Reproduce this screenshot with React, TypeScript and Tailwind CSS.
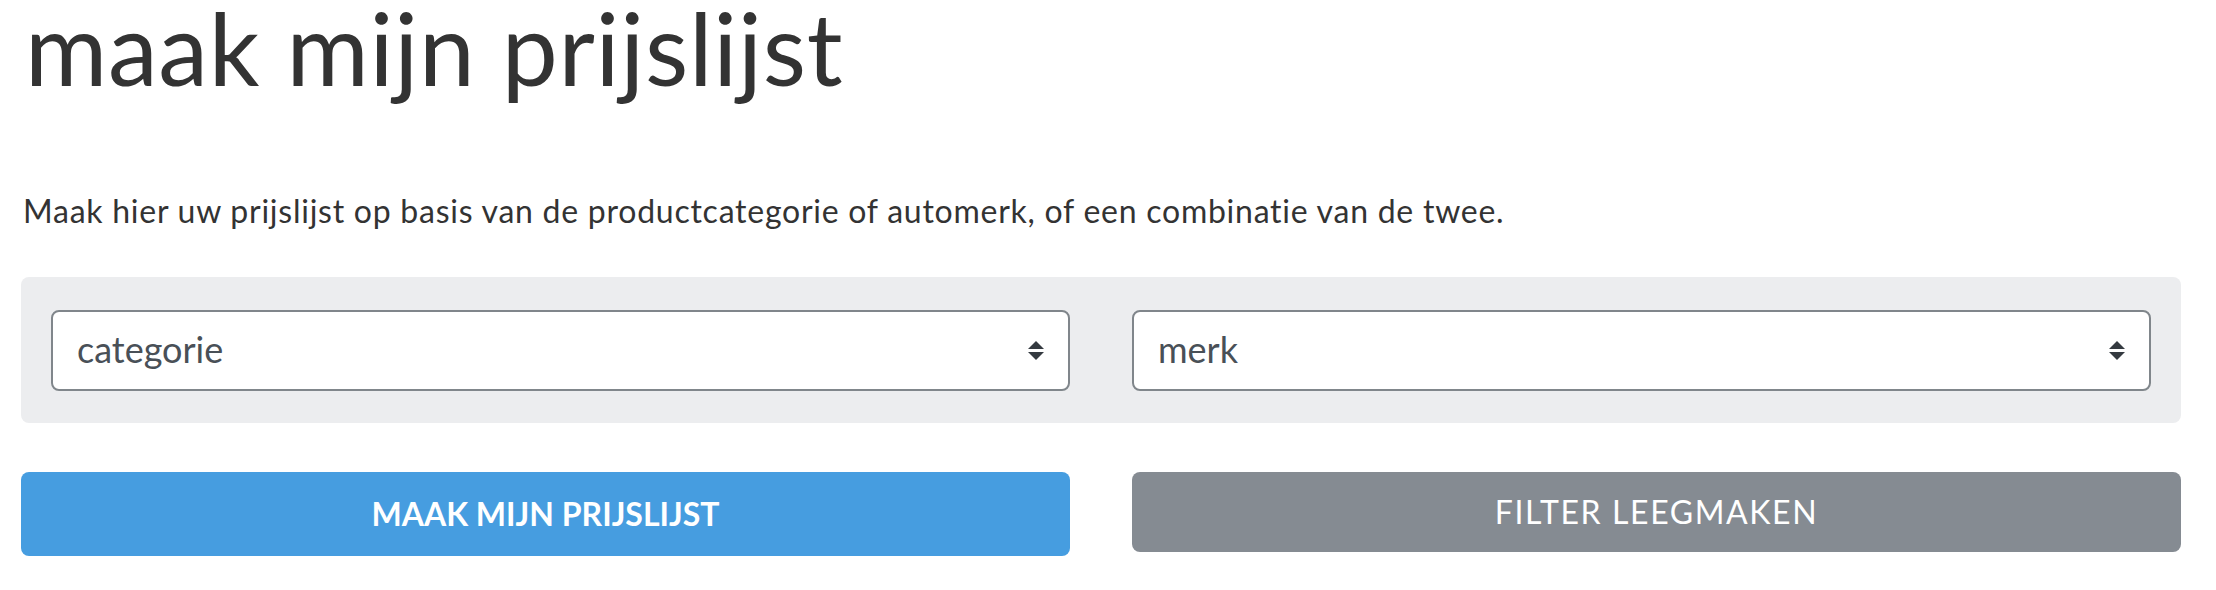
import React from "react";

function SortIcon() {
  return (
    <svg width="16" height="19" viewBox="0 0 16 19" className="shrink-0">
      <path d="M8 0 L16 8 L0 8 Z" fill="#343a40" />
      <path d="M0 11 L16 11 L8 19 Z" fill="#343a40" />
    </svg>
  );
}

function Select({ label }: { label: string }) {
  return (
    <div className="flex h-[81px] items-center justify-between rounded-[8px] border-2 border-[#80868b] bg-white pl-[24px] pr-[24px]">
      <span className="pb-[4px] text-[36px] leading-none text-[#495057]">{label}</span>
      <SortIcon />
    </div>
  );
}

export default function App() {
  return (
    <div
      className="min-h-[590px] w-[2216px] bg-white pl-[21px] text-[#333333]"
      style={{ fontFamily: "Lato, 'Noto Sans', sans-serif" }}
    >
      <div className="w-[2160px]">
        <h1 className="pl-[4px] text-[100px] font-normal leading-[94px] tracking-[0.7px] text-[#333333]">
          maak mijn prijslijst
        </h1>
        <p className="mt-[93px] pl-[2px] text-[32px] leading-[48px] tracking-[0.75px] text-[#333333]">
          Maak hier uw prijslijst op basis van de productcategorie of automerk, of een combinatie van de twee.
        </p>
        <div className="mt-[42px] rounded-[8px] bg-[#ecedef] px-[30px] pb-[32px] pt-[33px]">
          <div className="grid grid-cols-2 gap-[62px]">
            <Select label="categorie" />
            <Select label="merk" />
          </div>
        </div>
        <div className="mt-[49px] grid grid-cols-2 items-start gap-[62px]">
          <button className="flex h-[84px] items-center justify-center rounded-[8px] bg-[#469de0] text-[32px] font-bold uppercase text-white">
            maak mijn prijslijst
          </button>
          <button className="flex h-[80px] items-center justify-center rounded-[8px] bg-[#858b92] text-[32px] font-normal uppercase tracking-[1.6px] text-white">
            filter leegmaken
          </button>
        </div>
      </div>
    </div>
  );
}
